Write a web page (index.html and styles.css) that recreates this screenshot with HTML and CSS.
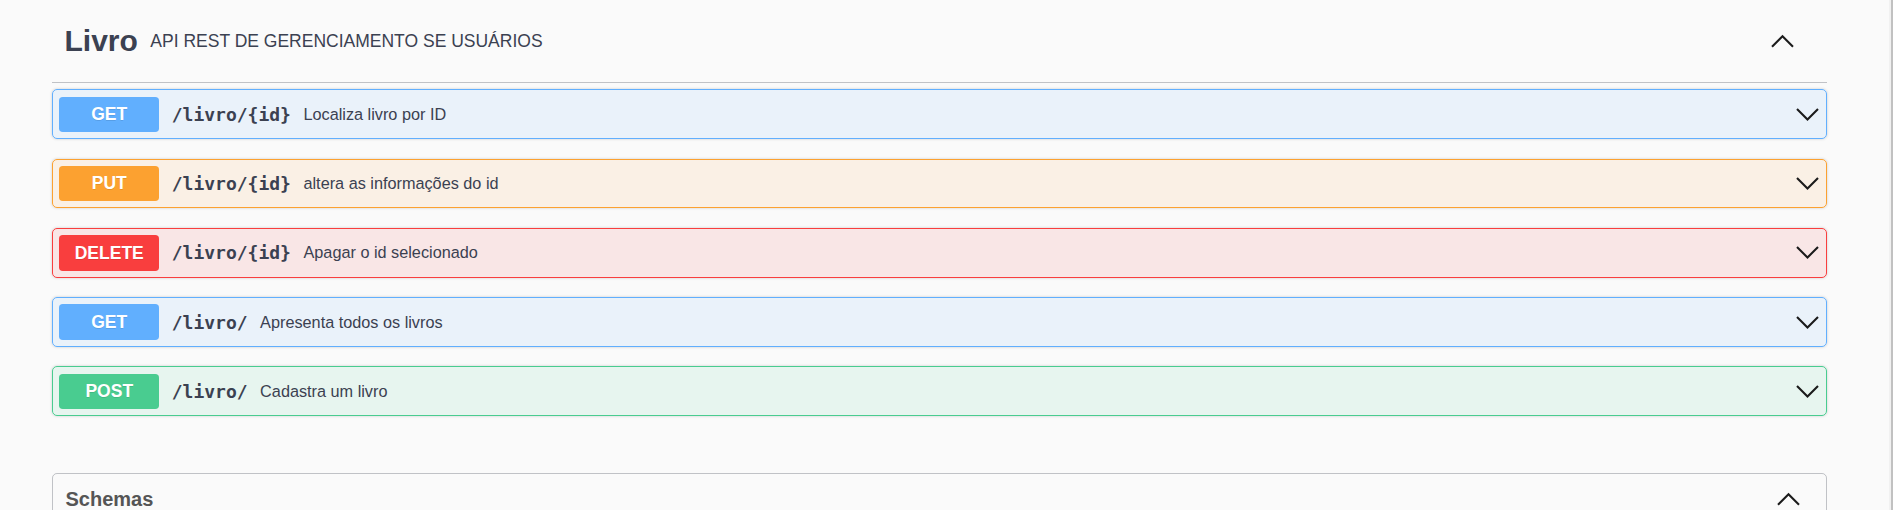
FILE: index.html
```html
<!DOCTYPE html>
<html lang="pt">
<head>
<meta charset="utf-8">
<title>Livro - API</title>
<link rel="stylesheet" href="styles.css">
</head>
<body>
<div class="page">
  <main class="wrapper">
    <section class="tag-section">
      <h3 class="tag">
        <span class="tag-name">Livro</span>
        <small class="tag-desc">API REST DE GERENCIAMENTO SE USUÁRIOS</small>
        <svg class="arrow arrow-tag" viewBox="0 0 20 20" aria-hidden="true"><polyline points="1.6,14.2 10,5.8 18.4,14.2"/></svg>
      </h3>
      <div class="ops">
        <div class="op op-get">
          <span class="method">GET</span>
          <span class="path">/livro/{id}</span>
          <span class="desc">Localiza livro por ID</span>
          <svg class="arrow" viewBox="0 0 20 20" aria-hidden="true"><polyline points="1.6,5.6 10,14 18.4,5.6"/></svg>
        </div>
        <div class="op op-put">
          <span class="method">PUT</span>
          <span class="path">/livro/{id}</span>
          <span class="desc">altera as informações do id</span>
          <svg class="arrow" viewBox="0 0 20 20" aria-hidden="true"><polyline points="1.6,5.6 10,14 18.4,5.6"/></svg>
        </div>
        <div class="op op-delete">
          <span class="method">DELETE</span>
          <span class="path">/livro/{id}</span>
          <span class="desc">Apagar o id selecionado</span>
          <svg class="arrow" viewBox="0 0 20 20" aria-hidden="true"><polyline points="1.6,5.6 10,14 18.4,5.6"/></svg>
        </div>
        <div class="op op-get">
          <span class="method">GET</span>
          <span class="path">/livro/</span>
          <span class="desc">Apresenta todos os livros</span>
          <svg class="arrow" viewBox="0 0 20 20" aria-hidden="true"><polyline points="1.6,5.6 10,14 18.4,5.6"/></svg>
        </div>
        <div class="op op-post">
          <span class="method">POST</span>
          <span class="path">/livro/</span>
          <span class="desc">Cadastra um livro</span>
          <svg class="arrow" viewBox="0 0 20 20" aria-hidden="true"><polyline points="1.6,5.6 10,14 18.4,5.6"/></svg>
        </div>
      </div>
    </section>
    <section class="models">
      <h4 class="models-title">
        <span>Schemas</span>
        <svg class="arrow" viewBox="0 0 20 20" aria-hidden="true"><polyline points="1.6,14.2 10,5.8 18.4,14.2"/></svg>
      </h4>
      <div class="models-body"></div>
    </section>
  </main>
  <div class="scrollbar"></div>
</div>
</body>
</html>
```

FILE: styles.css
```css
html, body {
  margin: 0;
  padding: 0;
  height: 100%;
  overflow: hidden;
  background: #fafafa;
}

body {
  font-family: "Liberation Sans", Arial, sans-serif;
  color: #3b4151;
}

.page {
  display: flex;
  height: 510px;
}

.wrapper {
  flex: 1;
  padding-left: 52px;
  padding-right: 0;
}

.tag-section,
.models {
  box-sizing: border-box;
  width: 1775px;
}

.tag {
  box-sizing: border-box;
  display: flex;
  align-items: center;
  height: 83px;
  margin: 0;
  padding: 0 32px 0 12.5px;
  border-bottom: 1px solid rgba(59, 65, 81, 0.3);
  font-size: 30px;
  font-weight: 700;
  color: #3b4151;
}

.tag-name {
  line-height: normal;
}

.tag-desc {
  flex: 1;
  padding: 0 12.5px;
  font-size: 17.5px;
  font-weight: 400;
  color: #3b4151;
}

.arrow {
  width: 25px;
  height: 25px;
  flex: none;
  fill: none;
  stroke: #1b1b1b;
  stroke-width: 1.65;
}

.ops {
  display: flex;
  flex-direction: column;
  gap: 19.4px;
  margin-top: 6.25px;
}

.op {
  display: flex;
  align-items: center;
  padding: 6.25px;
  border: 1px solid;
  border-radius: 5px;
  box-shadow: 0 0 3px rgba(0, 0, 0, 0.19);
}

.method {
  box-sizing: border-box;
  width: 100px;
  padding: 7.5px 0;
  line-height: 20.4px;
  border-radius: 3.75px;
  text-align: center;
  font-size: 17.5px;
  font-weight: 700;
  color: #fff;
  text-shadow: 0 1px 0 rgba(0, 0, 0, 0.1);
}

.path {
  padding: 0 12.5px;
  font-family: "DejaVu Sans Mono", monospace;
  font-size: 18px;
  font-weight: 700;
  color: #3b4151;
}

.desc {
  flex: 1;
  font-size: 16.25px;
  color: #3b4151;
}

.op-get {
  border-color: #61affe;
  background: rgba(97, 175, 254, 0.1);
}
.op-get .method { background: #61affe; }

.op-put {
  border-color: #fca130;
  background: rgba(252, 161, 48, 0.1);
}
.op-put .method { background: #fca130; }

.op-delete {
  border-color: #f93e3e;
  background: rgba(249, 62, 62, 0.1);
}
.op-delete .method { background: #f93e3e; }

.op-post {
  border-color: #49cc90;
  background: rgba(73, 204, 144, 0.1);
}
.op-post .method { background: #49cc90; }

.models {
  margin-top: 57px;
  border: 1px solid rgba(59, 65, 81, 0.3);
  border-radius: 5px;
}

.models-title {
  display: flex;
  align-items: center;
  justify-content: space-between;
  margin: 0;
  padding: 12.5px 25px 12.5px 12.5px;
  font-size: 20px;
  font-weight: 700;
  color: #555;
}

.models-body {
  height: 120px;
}

.scrollbar {
  flex: none;
  width: 2px;
  margin-left: 2px;
  border-left: 2px solid #f1f1f1;
  background: #c1c1c1;
}
```
